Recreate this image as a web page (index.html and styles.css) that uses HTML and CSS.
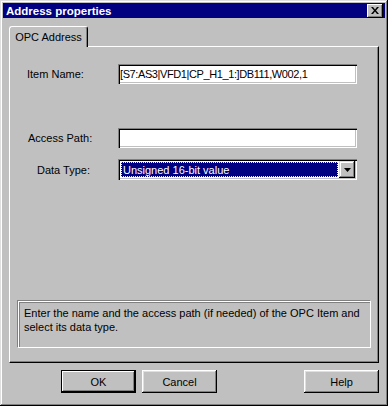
FILE: index.html
```html
<!DOCTYPE html>
<html lang="en">
<head>
    <meta charset="UTF-8">
    <title>Address properties</title>
    <link rel="stylesheet" href="styles.css">
</head>
<body>

    <div class="window">
        <div class="titlebar">
            <span class="title">Address properties</span>
            <button class="close" type="button" aria-label="Close">
                <svg width="8" height="7" viewBox="0 0 8 7">
                    <path d="M0 0h2l2 2.5L6 0h2L5 3.5 8 7H6L4 4.5 2 7H0l3-3.5z" fill="#000"/>
                </svg>
            </button>
        </div>

        <div class="content">
            <div class="tabs">
                <div class="tab active">OPC Address</div>
            </div>

            <div class="panel">
                <div class="row row-item">
                    <label class="label label-item" for="item">Item Name:</label>
                    <div class="field" id="item">[S7:AS3|VFD1|CP_H1_1:]DB111,W002,1</div>
                </div>

                <div class="row row-path">
                    <label class="label label-path" for="path">Access Path:</label>
                    <div class="field" id="path"></div>
                </div>

                <div class="row row-type">
                    <label class="label label-type" for="type">Data Type:</label>
                    <div class="combo" id="type">
                        <div class="combo-value"><span>Unsigned 16-bit value</span></div>
                        <div class="combo-btn">
                            <svg width="7" height="4" viewBox="0 0 7 4"><path d="M0 0h7L3.5 4z" fill="#000"/></svg>
                        </div>
                    </div>
                </div>

                <div class="hint">
                    Enter the name and the access path (if needed) of the OPC Item and
                    select its data type.
                </div>
            </div>

            <div class="buttons">
                <button class="btn default" type="button">OK</button>
                <button class="btn" type="button">Cancel</button>
                <span class="spacer"></span>
                <button class="btn" type="button">Help</button>
            </div>
        </div>
    </div>

</body>
</html>
```

FILE: styles.css
```css
* {
    box-sizing: border-box;
}

body {
    margin: 0;
    padding: 0;
    font-family: 'Liberation Sans', Arial, sans-serif;
    font-size: 11px;
    color: #000;
    background: #c0c0c0;
}

.window {
    width: 388px;
    height: 406px;
    padding: 3px;
    background: #c0c0c0;
    box-shadow: inset -1px -1px #000, inset 1px 1px #dfdfdf,
                inset -2px -2px #808080, inset 2px 2px #fff;
    display: flex;
    flex-direction: column;
}

.titlebar {
    height: 18px;
    background: #000080;
    display: flex;
    align-items: center;
    justify-content: space-between;
    padding: 0 2px 0 3px;
}

.title {
    color: #fff;
    font-weight: bold;
    font-size: 11.5px;
}

.close {
    width: 16px;
    height: 14px;
    padding: 0;
    border: none;
    background: #c0c0c0;
    box-shadow: inset -1px -1px #000, inset 1px 1px #fff,
                inset -2px -2px #808080;
    display: flex;
    align-items: center;
    justify-content: center;
}

.content {
    flex: 1;
    display: flex;
    flex-direction: column;
    padding: 8px 6px 10px 6px;
}

.tabs {
    display: flex;
    height: 20px;
    position: relative;
    z-index: 1;
}

.tab {
    width: 79px;
    height: 21px;
    background: #c0c0c0;
    border-top: 1px solid #fff;
    border-left: 1px solid #fff;
    border-right: 1px solid #000;
    border-radius: 3px 3px 0 0;
    box-shadow: inset -1px 0 #808080;
    text-align: center;
    padding-top: 4px;
}

.panel {
    height: 317px;
    border-top: 1px solid #fff;
    border-left: 1px solid #fff;
    border-right: 1px solid #000;
    border-bottom: 1px solid #000;
    box-shadow: inset -1px -1px #808080;
    padding: 17px 0 14px 0;
    display: flex;
    flex-direction: column;
}

.row {
    display: grid;
    grid-template-columns: 108px 239px;
    align-items: center;
}

.row-path {
    margin-top: 44px;
}

.row-type {
    margin-top: 11px;
}

.label-item {
    padding-left: 17px;
}

.label-path {
    padding-left: 18px;
}

.label-type {
    padding-left: 27px;
}

.field {
    height: 20px;
    background: #fff;
    box-shadow: inset 1px 1px #808080, inset 2px 2px #000,
                inset -1px -1px #fff, inset -2px -2px #c0c0c0;
    padding: 4px 3px 0 2px;
    letter-spacing: -0.4px;
    white-space: nowrap;
}

.combo {
    height: 21px;
    background: #fff;
    box-shadow: inset 1px 1px #808080, inset 2px 2px #000,
                inset -1px -1px #fff, inset -2px -2px #c0c0c0;
    padding: 2px;
    display: flex;
}

.combo-value {
    flex: 1;
    padding: 1px;
    background: #fff;
}

.combo-value span {
    display: block;
    height: 100%;
    background: #000080;
    color: #fff;
    outline: 1px dotted #ffff80;
    outline-offset: -1px;
    padding: 2px 0 0 2px;
}

.combo-btn {
    width: 16px;
    background: #c0c0c0;
    box-shadow: inset -1px -1px #000, inset 1px 1px #dfdfdf,
                inset -2px -2px #808080, inset 2px 2px #fff;
    display: flex;
    align-items: center;
    justify-content: center;
}

.hint {
    margin: auto 7px 0 8px;
    height: 47px;
    border: 1px solid #fff;
    box-shadow: inset 1px 1px #808080, -1px -1px #808080;
    padding: 4px 5px;
    line-height: 14px;
}

.buttons {
    display: flex;
    margin-top: 7px;
    padding-left: 52px;
}

.btn {
    width: 75px;
    height: 23px;
    padding: 0;
    border: none;
    background: #c0c0c0;
    font-family: 'Liberation Sans', Arial, sans-serif;
    font-size: 11px;
    color: #000;
    margin-right: 6px;
    box-shadow: inset -1px -1px #000, inset 1px 1px #fff,
                inset -2px -2px #808080, inset 2px 2px #dfdfdf;
}

.btn.default {
    box-shadow: inset 0 0 0 1px #000, inset -2px -2px #000,
                inset 2px 2px #fff, inset -3px -3px #808080;
}

.spacer {
    flex: 1;
}

.buttons .btn:last-child {
    margin-right: 0;
}
```
